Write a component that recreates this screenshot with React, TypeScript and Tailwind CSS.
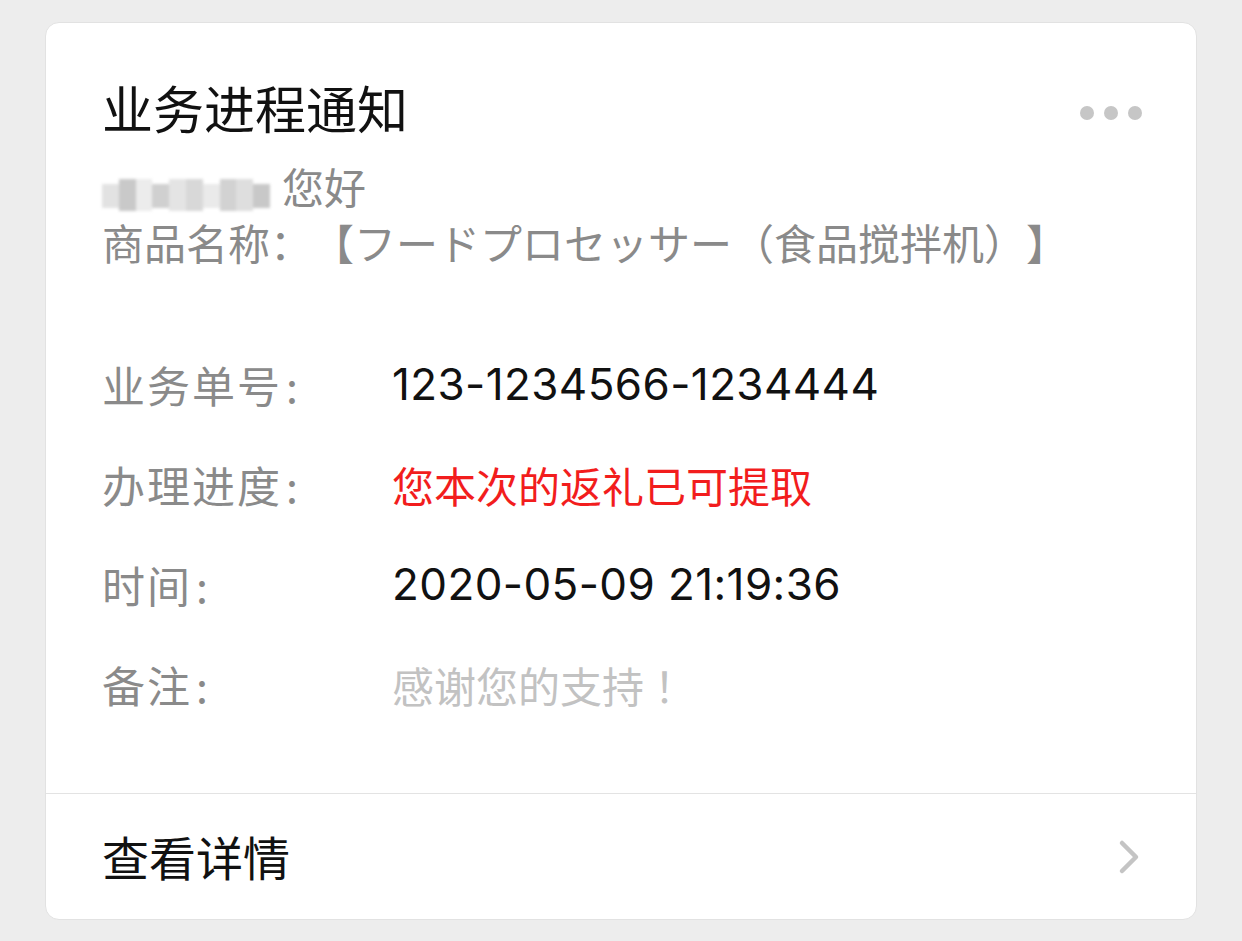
import React from 'react';

const ROWS = [
  { label: '业务单号', value: '123-1234566-1234444', tone: 'text-[#111] font-[family-name:Inter,sans-serif] text-[44px] tracking-[0.4px]' },
  { label: '办理进度', value: '您本次的返礼已可提取', tone: 'text-[#f21d1d] text-[42px]' },
  { label: '时间', value: '2020-05-09 21:19:36', tone: 'text-[#111] font-[family-name:Inter,sans-serif] text-[44px] tracking-[0.4px]' },
  { label: '备注', value: '感谢您的支持', tone: 'text-[#c2c2c2] text-[42px]', tail: '！' },
];

// pixelated blur that hides the customer name
const BLUR_CELLS = [
  'bg-[#e2e2e2]', 'bg-[#c9c9c9]', 'bg-[#ececec]', 'bg-[#d0d0d0]', 'bg-[#e4e4e4]',
  'bg-[#d8d8d8]', 'bg-[#eaeaea]', 'bg-[#d2d2d2]', 'bg-[#dedede]', 'bg-[#c8c8c8]',
];

function NameBlur() {
  return (
    <span className="inline-flex w-[168px] h-[32px] mr-[12px] align-[-4px] blur-[1.5px]">
      {BLUR_CELLS.map((c, i) => (
        <span key={i} className={`flex-1 ${c} ${i % 3 === 0 ? 'mt-[5px] mb-[3px]' : ''}`} />
      ))}
    </span>
  );
}

export default function App() {
  return (
    <div className="min-h-screen bg-[#ededed] px-[45px] pt-[22px] pb-[20px] font-[family-name:'Noto_Sans_CJK_SC',sans-serif] [text-spacing-trim:space-all]">
      <div className="bg-white rounded-[14px] border border-[#e2e2e2] overflow-hidden">
        <div className="pl-[56px] pr-[54px] pt-[54px] pb-[59px]">
          <div className="flex items-center justify-between">
            <h1 className="text-[51px] leading-[60px] text-[#111] font-normal">业务进程通知</h1>
            <div className="flex gap-[10px] mt-[12px]">
              <span className="w-[14px] h-[14px] rounded-full bg-[#c6c6c6]" />
              <span className="w-[14px] h-[14px] rounded-full bg-[#c6c6c6]" />
              <span className="w-[14px] h-[14px] rounded-full bg-[#c6c6c6]" />
            </div>
          </div>

          <p className="mt-[21px] text-[42px] leading-[56px] text-[#8a8a8a]">
            <NameBlur />
            您好
          </p>
          <p className="text-[42px] leading-[56px] text-[#8a8a8a]">
            商品名称：【フードプロセッサー（食品搅拌机）】
          </p>

          <div className="mt-[64px] flex flex-col">
            {ROWS.map((row) => (
              <div key={row.label} className="flex items-center h-[100px]">
                <span className="w-[290px] shrink-0 text-[43px] text-[#8a8a8a] tracking-[2px]">
                  {row.label}
                  <span className="ml-[4px]">:</span>
                </span>
                <span className={row.tone}>
                  {row.value}
                  {row.tail && <span className="pl-[10px]">{row.tail}</span>}
                </span>
              </div>
            ))}
          </div>
        </div>

        <div className="border-t border-[#e3e3e3] h-[126px] pl-[56px] pr-[54px] flex items-center justify-between">
          <span className="text-[47px] text-[#111]">查看详情</span>
          <svg width="26" height="36" viewBox="0 0 26 36" aria-hidden>
            <polyline
              points="6,4 20,18 6,32"
              fill="none"
              stroke="#c4c4c4"
              strokeWidth="4.5"
              strokeLinecap="round"
              strokeLinejoin="round"
            />
          </svg>
        </div>
      </div>
    </div>
  );
}
